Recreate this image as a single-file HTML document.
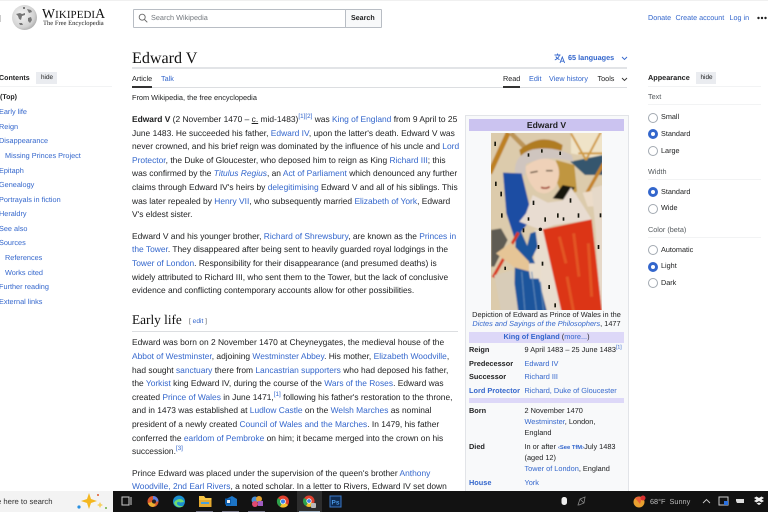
<!DOCTYPE html>
<html><head><meta charset="utf-8"><title>Edward V - Wikipedia</title>
<style>
html,body{margin:0;padding:0;background:#fff}
#p{position:relative;width:768px;height:512px;overflow:hidden;background:#fff;font-family:"Liberation Sans",sans-serif;color:#202122;filter:blur(.3px);text-rendering:geometricPrecision}
#p div,#p svg.a{position:absolute}
.l{white-space:nowrap;font-size:8.42px;line-height:14px;height:14px}
a{color:#36c;text-decoration:none}
sup{font-size:6.3px;line-height:0;color:#36c}
.s{font-size:7.3px;color:#36c}
.i{font-size:7.35px}
.b{font-weight:bold}
.t{font-size:7.25px}
.r{background:#eaecf0}
.o{width:8px;height:8px;border:1px solid #a2a9b1;border-radius:50%;background:#fff}
.c{width:4px;height:4px;border:3.5px solid #36c;border-radius:50%;background:#fff}
</style></head><body><div id="p">
<div style="left:0;top:0;width:768px;height:1px;background:#f0f0f0"></div>
<div style="left:0;top:15px;width:1px;height:7px;background:#ccc"></div>

<!-- logo -->
<svg class="a" style="left:11px;top:4px" width="27" height="27" viewBox="0 0 27 27"><defs><radialGradient id="g" cx=".4" cy=".4" r=".7"><stop offset="0" stop-color="#f6f6f6"/><stop offset=".7" stop-color="#d2d2d2"/><stop offset="1" stop-color="#a0a0a0"/></radialGradient></defs><circle cx="13.5" cy="13.5" r="12.5" fill="url(#g)"/><path d="M5 10l4-1 2 1 3-1 0 2-3 1-1 4-2-1-1-3zM16 5l4 1 1 2-3 1zM17 14l3-1 1 3-2 3-2-2zM8 19l3 0 1 2-3 0zM12 3l2 0 0 2-2 0z" fill="#777"/></svg>
<div class="l" style="left:42px;top:7px;font-family:'Liberation Serif',serif;font-size:13.8px;color:#111;letter-spacing:.1px">W<span style="font-size:10.9px">IKIPEDI</span>A</div>
<div class="l" style="left:43px;top:16.5px;font-family:'Liberation Serif',serif;font-size:6.55px;color:#222">The Free Encyclopedia</div>

<!-- search -->
<div style="left:133px;top:9px;width:211px;height:16.5px;border:1px solid #b8bdc4;border-radius:1px"></div>
<svg class="a" style="left:138px;top:13px" width="10" height="10" viewBox="0 0 10 10"><circle cx="4.200" cy="4.200" r="3" fill="none" stroke="#666" stroke-width=".9"/><path d="M6.500 6.500L9.300 9.300" stroke="#666" stroke-width=".9"/></svg>
<div class="l" style="left:151px;top:11px;font-size:7.3px;color:#72777d">Search Wikipedia</div>
<div style="left:344.5px;top:9px;width:35.5px;height:16.5px;border:1px solid #b8bdc4;background:#f8f9fa;border-radius:1px"></div>
<div class="l b" style="left:351px;top:11px;font-size:7.1px">Search</div>

<div class="l" style="left:648px;top:11px;font-size:7.2px"><a>Donate</a></div>
<div class="l" style="left:675.5px;top:11px;font-size:7.2px"><a>Create account</a></div>
<div class="l" style="left:729.5px;top:11px;font-size:7.2px"><a>Log in</a></div>
<svg class="a" style="left:756px;top:16px" width="12" height="4"><circle cx="2.500" cy="2" r="1.200" fill="#222"/><circle cx="6" cy="2" r="1.200" fill="#222"/><circle cx="9.500" cy="2" r="1.200" fill="#222"/></svg>

<!-- title -->
<div class="l" style="left:132px;top:49px;height:20px;line-height:20px;font-family:'Liberation Serif',serif;font-size:16.1px;color:#111">Edward V</div>
<div style="left:132px;top:67px;width:495px;height:1.5px;background:#e2e4e7"></div>
<svg class="a" style="left:554px;top:53px" width="12" height="11" viewBox="0 0 12 11"><path d="M.5 2h6M3.500 .5V2M5.500 2C5 4 3 6 .8 7M1.800 3.500C2.500 5 4 6 5.500 6.600M6 10l2.300-6 2.300 6M7 8.200h3" fill="none" stroke="#36c" stroke-width=".9"/></svg>
<div class="l b" style="left:568px;top:51px;font-size:7.3px;color:#36c">65 languages</div>
<svg class="a" style="left:621px;top:56px" width="7" height="5"><path d="M1 1l2.500 2.500L6 1" fill="none" stroke="#36c" stroke-width=".9"/></svg>

<div class="l t" style="left:132px;top:71.5px">Article</div>
<div class="l t" style="left:161px;top:71.5px"><a>Talk</a></div>
<div style="left:132px;top:86.7px;width:495px;height:1px;background:#dcdee1"></div>
<div style="left:132px;top:86.3px;width:20px;height:1.5px;background:#333"></div>
<div class="l t" style="left:503px;top:71.5px">Read</div>
<div style="left:503px;top:86.3px;width:17px;height:1.5px;background:#333"></div>
<div class="l t" style="left:529px;top:71.5px"><a>Edit</a></div>
<div class="l t" style="left:549px;top:71.5px"><a>View history</a></div>
<div class="l t" style="left:597.5px;top:71.5px">Tools</div>
<svg class="a" style="left:621px;top:76.5px" width="7" height="5"><path d="M1 1l2.500 2.500L6 1" fill="none" stroke="#333" stroke-width=".9"/></svg>
<div class="l i" style="left:132px;top:91px">From Wikipedia, the free encyclopedia</div>

<!-- contents -->
<div class="l b" style="left:-1px;top:71px;font-size:7.1px">Contents</div>
<div class="r" style="left:36px;top:72px;width:21px;height:11.5px"></div>
<div class="l" style="left:41px;top:70.5px;font-size:6.4px">hide</div>
<div style="left:0;top:86.3px;width:112px;height:1px;background:#f2f3f4"></div>
<div class="l b" style="left:0;top:90.5px;font-size:7px">(Top)</div>
<div class="l s" style="left:-1px;top:105px">Early life</div>
<div class="l s" style="left:-1px;top:119.7px">Reign</div>
<div class="l s" style="left:-1px;top:134.3px">Disappearance</div>
<div class="l s" style="left:5px;top:149px">Missing Princes Project</div>
<div class="l s" style="left:-1px;top:163.5px">Epitaph</div>
<div class="l s" style="left:-1px;top:178px">Genealogy</div>
<div class="l s" style="left:-1px;top:192.7px">Portrayals in fiction</div>
<div class="l s" style="left:-1px;top:207.3px">Heraldry</div>
<div class="l s" style="left:-1px;top:222px">See also</div>
<div class="l s" style="left:-1px;top:236.3px">Sources</div>
<div class="l s" style="left:5px;top:251px">References</div>
<div class="l s" style="left:5px;top:265.7px">Works cited</div>
<div class="l s" style="left:-1px;top:280.3px">Further reading</div>
<div class="l s" style="left:-1px;top:295px">External links</div>

<!-- body -->
<div class="l" style="left:132px;top:112px"><b>Edward V</b> (2 November 1470 – <u>c.</u> mid-1483)<sup>[1][2]</sup> was <a>King of England</a> from 9 April to 25</div>
<div class="l" style="left:132px;top:125.6px">June 1483. He succeeded his father, <a>Edward IV</a>, upon the latter's death. Edward V was</div>
<div class="l" style="left:132px;top:139.2px">never crowned, and his brief reign was dominated by the influence of his uncle and <a>Lord</a></div>
<div class="l" style="left:132px;top:152.8px"><a>Protector</a>, the Duke of Gloucester, who deposed him to reign as King <a>Richard III</a>; this</div>
<div class="l" style="left:132px;top:166.4px">was confirmed by the <a><i>Titulus Regius</i></a>, an <a>Act of Parliament</a> which denounced any further</div>
<div class="l" style="left:132px;top:180px">claims through Edward IV's heirs by <a>delegitimising</a> Edward V and all of his siblings. This</div>
<div class="l" style="left:132px;top:193.6px">was later repealed by <a>Henry VII</a>, who subsequently married <a>Elizabeth of York</a>, Edward</div>
<div class="l" style="left:132px;top:207.2px">V's eldest sister.</div>

<div class="l" style="left:132px;top:228.7px">Edward V and his younger brother, <a>Richard of Shrewsbury</a>, are known as the <a>Princes in</a></div>
<div class="l" style="left:132px;top:242.3px"><a>the Tower</a>. They disappeared after being sent to heavily guarded royal lodgings in the</div>
<div class="l" style="left:132px;top:255.9px"><a>Tower of London</a>. Responsibility for their disappearance (and presumed deaths) is</div>
<div class="l" style="left:132px;top:269.5px">widely attributed to Richard III, who sent them to the Tower, but the lack of conclusive</div>
<div class="l" style="left:132px;top:283.1px">evidence and conflicting contemporary accounts allow for other possibilities.</div>

<div class="l" style="left:132px;top:312px;height:16px;line-height:16px;font-family:'Liberation Serif',serif;font-size:13.3px;color:#111">Early life</div>
<div class="l" style="left:189px;top:315px;font-size:6.6px;color:#54595d">[ <a>edit</a> ]</div>
<div style="left:132px;top:330.5px;width:326px;height:1px;background:#dcdee1"></div>

<div class="l" style="left:132px;top:335.3px">Edward was born on 2 November 1470 at Cheyneygates, the medieval house of the</div>
<div class="l" style="left:132px;top:348.9px"><a>Abbot of Westminster</a>, adjoining <a>Westminster Abbey</a>. His mother, <a>Elizabeth Woodville</a>,</div>
<div class="l" style="left:132px;top:362.5px">had sought <a>sanctuary</a> there from <a>Lancastrian supporters</a> who had deposed his father,</div>
<div class="l" style="left:132px;top:376.1px">the <a>Yorkist</a> king Edward IV, during the course of the <a>Wars of the Roses</a>. Edward was</div>
<div class="l" style="left:132px;top:389.7px">created <a>Prince of Wales</a> in June 1471,<sup>[1]</sup> following his father's restoration to the throne,</div>
<div class="l" style="left:132px;top:403.3px">and in 1473 was established at <a>Ludlow Castle</a> on the <a>Welsh Marches</a> as nominal</div>
<div class="l" style="left:132px;top:416.9px">president of a newly created <a>Council of Wales and the Marches</a>. In 1479, his father</div>
<div class="l" style="left:132px;top:430.5px">conferred the <a>earldom of Pembroke</a> on him; it became merged into the crown on his</div>
<div class="l" style="left:132px;top:444.1px">succession.<sup>[3]</sup></div>
<div class="l" style="left:132px;top:465.7px">Prince Edward was placed under the supervision of the queen's brother <a>Anthony</a></div>
<div class="l" style="left:132px;top:479.3px"><a>Woodville, 2nd Earl Rivers</a>, a noted scholar. In a letter to Rivers, Edward IV set down</div>

<!-- infobox -->
<div style="left:465px;top:115px;width:162px;height:385px;background:#f8f9fa;border:1px solid #e2e4e8"></div>
<div style="left:469px;top:119px;width:155px;height:12px;background:#cbc3f0"></div>
<div class="l b" style="left:469px;top:118px;width:155px;text-align:center;font-size:8.6px">Edward V</div>

<!-- miniature: layered shapes, upper blue panel drawn late so it stays visible -->
<svg class="a" style="left:490.5px;top:133px" width="111" height="177" viewBox="0 9 333 531" preserveAspectRatio="none">
<defs><filter id="f" x="-5%" y="-5%" width="110%" height="110%"><feGaussianBlur stdDeviation="2"/></filter><filter id="f2"><feGaussianBlur stdDeviation=".9"/></filter></defs>
<g filter="url(#f)">
<rect x="-10" y="0" width="360" height="550" fill="#dccbac"/>
<path d="M240 5H340V90L240 70z" fill="#efe3c8"/>
<path d="M238 95L336 75V135L282 135z" fill="#35566e"/>
<path d="M240 10L285 90M330 5L285 90M262 70H336" stroke="#cf9a40" stroke-width="6" fill="none"/>
<path d="M52 8L-4 130" stroke="#bd8022" stroke-width="15"/>
<path d="M338 100L288 188" stroke="#c4842a" stroke-width="10"/>
<path d="M60 10L100 50" stroke="#bc9558" stroke-width="14"/>
<path d="M0 300L30 295L50 330L10 410H0z" fill="#5f5b52"/>
<path d="M85 60Q150 5 215 45L210 70Q150 45 90 80z" fill="#b07c20"/>
<path d="M72 128Q68 75 125 58Q190 48 242 75L248 95Q170 72 105 102L102 138z" fill="#cfc5bf"/>
<path d="M195 90L250 105L258 185L215 200L195 150z" fill="#c09640"/>
<path d="M104 110Q150 72 195 95Q215 130 192 172Q165 202 135 182Q105 150 104 110z" fill="#efd1b8"/>
<path d="M150 172Q165 178 176 170" stroke="#a0402e" stroke-width="5" fill="none"/>
<path d="M118 128l22-4M165 122l20 0" stroke="#5e4c38" stroke-width="4"/>
<path d="M185 205L215 165L252 172L225 210z" fill="#17130e"/>
<path d="M36 128L92 130L124 262L72 330L46 250z" fill="#1f4ea3"/>
<path d="M125 195L170 218L215 212L240 172L275 225L302 268L190 285L150 300L85 275L105 250z" fill="#e8dcd1"/>
<path d="M275 188L320 180L325 228L290 230z" fill="#ecdcc9"/>
<path d="M302 175L338 165V546H328L314 300z" fill="#e6d9c9"/>
<path d="M146 300L302 268L333 546H208z" fill="#dc3618"/>
<path d="M205 320L225 400M248 310L264 440M292 340L302 500M228 440L248 546" stroke="#e4622a" stroke-width="9" fill="none" opacity=".7"/>
<path d="M130 300L156 300L212 546H170L130 400z" fill="#e8ddcf"/>
<path d="M74 320L88 300L132 400L168 546H68z" fill="#1f559c"/>
<path d="M118 310L134 305L140 350L115 400L108 350z" fill="#1f559c"/>
<path d="M110 400L150 400L152 446H118z" fill="#e9ddcc"/>
<path d="M92 425L102 546M122 425L137 546M148 455L158 546" stroke="#5f8ab8" stroke-width="3"/>
<path d="M6 442L82 308" stroke="#d8381a" stroke-width="9"/>
<path d="M15 370L60 338L114 395L114 424L70 412z" fill="#e6c596"/>
<path d="M10 436L65 420L82 546H30z" fill="#d8ccb8"/>
</g>
<g fill="#17120e" filter="url(#f2)"><rect x="10" y="35" width="5" height="13"/><rect x="28" y="185" width="5" height="14"/><rect x="12" y="155" width="5" height="13"/><rect x="30" y="250" width="5" height="13"/><rect x="125" y="212" width="5" height="13"/><rect x="160" y="262" width="5" height="13"/><rect x="198" y="250" width="5" height="13"/><rect x="236" y="205" width="5" height="13"/><rect x="260" y="250" width="5" height="13"/><rect x="110" y="262" width="5" height="10"/><rect x="215" y="262" width="5" height="10"/><circle cx="148" cy="298" r="5"/><rect x="140" y="345" width="5" height="12"/><rect x="152" y="395" width="5" height="12"/><rect x="172" y="465" width="5" height="12"/><rect x="190" y="520" width="5" height="12"/><rect x="95" y="295" width="5" height="12"/><rect x="320" y="345" width="5" height="12"/><rect x="110" y="70" width="5" height="10"/><rect x="150" y="58" width="5" height="10"/><rect x="205" y="65" width="5" height="10"/><rect x="40" y="410" width="5" height="10"/><rect x="326" y="250" width="5" height="12"/></g>
</svg>
<div class="l i" style="left:469px;top:308.3px;width:155px;text-align:center">Depiction of Edward as Prince of Wales in the</div>
<div class="l i" style="left:469px;top:317px;width:155px;text-align:center"><a><i>Dictes and Sayings of the Philosophers</i></a>, 1477</div>
<div style="left:469px;top:331.7px;width:155px;height:11px;background:#ddd8f8"></div>
<div class="l i" style="left:469px;top:330px;width:155px;text-align:center"><a class="b">King of England</a> (<a>more...</a>)</div>
<div class="l i b" style="left:469px;top:343px">Reign</div>
<div class="l i" style="left:524.5px;top:343px">9 April 1483 – 25 June 1483<sup style="font-size:5.2px">[1]</sup></div>
<div class="l i b" style="left:469px;top:356.7px">Predecessor</div>
<div class="l i" style="left:524.5px;top:356.7px"><a>Edward IV</a></div>
<div class="l i b" style="left:469px;top:370.3px">Successor</div>
<div class="l i" style="left:524.5px;top:370.3px"><a>Richard III</a></div>
<div class="l i b" style="left:469px;top:383.5px"><a>Lord Protector</a></div>
<div class="l i" style="left:524.5px;top:383.5px"><a>Richard, Duke of Gloucester</a></div>
<div style="left:469px;top:398px;width:155px;height:5px;background:#ddd8f8"></div>
<div class="l i b" style="left:469px;top:403.5px">Born</div>
<div class="l i" style="left:524.5px;top:403.5px">2 November 1470</div>
<div class="l i" style="left:524.5px;top:414.5px"><a>Westminster</a>, London,</div>
<div class="l i" style="left:524.5px;top:425.5px">England</div>
<div class="l i b" style="left:469px;top:439.5px">Died</div>
<div class="l i" style="left:524.5px;top:439.5px">In or after <a class="b" style="font-size:5.8px">‹See TfM›</a>July 1483</div>
<div class="l i" style="left:524.5px;top:450.5px">(aged 12)</div>
<div class="l i" style="left:524.5px;top:461.7px"><a>Tower of London</a>, England</div>
<div class="l i b" style="left:469px;top:475.5px"><a>House</a></div>
<div class="l i" style="left:524.5px;top:475.5px"><a>York</a></div>

<!-- appearance -->
<div class="l b" style="left:648px;top:71px;font-size:7.3px">Appearance</div>
<div class="r" style="left:696px;top:72px;width:20px;height:11.5px"></div>
<div class="l" style="left:700.5px;top:70.5px;font-size:6.4px">hide</div>
<div style="left:648px;top:86.3px;width:113px;height:1px;background:#f2f3f4"></div>
<div class="l t" style="left:648px;top:90px;color:#54595d">Text</div>
<div style="left:648px;top:104.3px;width:113px;height:1px;background:#f2f3f4"></div>
<div class="o" style="left:648px;top:112.5px"></div><div class="l t" style="left:661px;top:110px">Small</div>
<div class="c" style="left:648px;top:129.2px"></div><div class="l t" style="left:661px;top:126.7px">Standard</div>
<div class="o" style="left:648px;top:146px"></div><div class="l t" style="left:661px;top:143.5px">Large</div>
<div class="l t" style="left:648px;top:165px;color:#54595d">Width</div>
<div style="left:648px;top:179.3px;width:113px;height:1px;background:#f2f3f4"></div>
<div class="c" style="left:648px;top:187px"></div><div class="l t" style="left:661px;top:184.5px">Standard</div>
<div class="o" style="left:648px;top:203.5px"></div><div class="l t" style="left:661px;top:201px">Wide</div>
<div class="l t" style="left:648px;top:222.5px;color:#54595d">Color (beta)</div>
<div style="left:648px;top:237px;width:113px;height:1px;background:#f2f3f4"></div>
<div class="o" style="left:648px;top:245px"></div><div class="l t" style="left:661px;top:242.5px">Automatic</div>
<div class="c" style="left:648px;top:261.5px"></div><div class="l t" style="left:661px;top:259px">Light</div>
<div class="o" style="left:648px;top:278px"></div><div class="l t" style="left:661px;top:275.5px">Dark</div>

<!-- taskbar -->
<div style="left:0;top:491px;width:768px;height:21px;background:#121212"></div>
<div style="left:0;top:491px;width:113px;height:21px;background:#f3f3f3"></div>
<div class="l" style="left:-3px;top:495px;font-size:7.7px;color:#333">e here to search</div>
<svg class="a" style="left:74px;top:491px" width="36" height="21" viewBox="0 0 36 21"><path d="M15 2l2 6 6 2-6 2-2 6-2-6-6-2 6-2z" fill="#f4b720"/><path d="M26 11l1 2 2 1-2 1-1 2-1-2-2-1 2-1z" fill="#f6d060"/><circle cx="5" cy="16" r="1.600" fill="#2a90e0"/><circle cx="24" cy="4" r="1" fill="#e05a30"/><circle cx="32" cy="17" r="1" fill="#6db040"/></svg>
<div style="left:297px;top:491px;width:25px;height:21px;background:#2d2d2d"></div>
<div style="left:299px;top:510.5px;width:21px;height:1.5px;background:#9ab"></div>
<div style="left:196px;top:510.5px;width:17px;height:1.5px;background:#778"></div>
<div style="left:222px;top:510.5px;width:17px;height:1.5px;background:#778"></div>
<div style="left:248px;top:510.5px;width:17px;height:1.5px;background:#778"></div>
<svg class="a" style="left:113px;top:491px" width="250" height="21" viewBox="113 491 250 21">
<path d="M122 497h7v8h-7zM131 497v8" fill="none" stroke="#ccc" stroke-width="1"/>
<circle cx="153" cy="501.500" r="5.500" fill="#d8562e"/><path d="M153 496a5.500 5.500 0 0 1 5.500 5.500h-5.500z" fill="#5f7fe0"/><path d="M148 503a5.500 5.500 0 0 0 5 4l3-2-4-3z" fill="#e8b030"/><circle cx="154" cy="501.500" r="2" fill="#222"/>
<circle cx="179" cy="501.500" r="6" fill="#1b8fd0"/><path d="M174 503c2-5 9-5 10-1l-4 .5c-1-1-3-1-3 1s4 3.500 7 2a6 6 0 0 1-10-2.500z" fill="#6fdc70"/>
<path d="M199 496h5l1.500 2h6v9h-12.500z" fill="#f6c445"/><rect x="199" y="500" width="12.500" height="7" fill="#e5a92f"/><rect x="201" y="502" width="8" height="2" fill="#4aa0dc"/>
<path d="M226 499l6-3 5 3v7h-11z" fill="#1c74c6"/><rect x="225" y="498.500" width="6" height="6" fill="#0a5aa8"/><rect x="227" y="500" width="3" height="3" fill="#eee"/>
<circle cx="255" cy="500" r="3.500" fill="#4a90d8"/><circle cx="259" cy="499" r="3" fill="#e0a030"/><circle cx="255" cy="504" r="3" fill="#e04a70"/><rect x="258" y="501" width="5" height="5" fill="#a05cc0"/>
<circle cx="283" cy="501.500" r="6" fill="#e0412f"/><path d="M283 501.500L288 505A6 6 0 0 1 280 506.700z" fill="#f3c22c"/><path d="M283 501.500L280 506.700A6 6 0 0 1 278 498z" fill="#2ca24c"/><circle cx="283" cy="501.500" r="2.800" fill="#fff"/><circle cx="283" cy="501.500" r="2.100" fill="#3a80e8"/>
<circle cx="309" cy="501" r="5.500" fill="#e0412f"/><path d="M309 501L314 504A5.500 5.500 0 0 1 306 506z" fill="#f3c22c"/><path d="M309 501L306 506A5.500 5.500 0 0 1 304 498z" fill="#2ca24c"/><circle cx="309" cy="501" r="2.600" fill="#fff"/><circle cx="309" cy="501" r="1.900" fill="#3a80e8"/><rect x="311" y="503" width="5" height="5" rx="1" fill="#bbb"/>
<rect x="330" y="496" width="11" height="11" fill="#0e2a50" stroke="#3a78c8"/>
<text x="331.500" y="504.500" font-size="6.500" font-weight="bold" fill="#4a9ae8" font-family="Liberation Sans">Ps</text>
</svg>
<svg class="a" style="left:555px;top:491px" width="213" height="21" viewBox="555 491 213 21">
<rect x="561.500" y="497" width="5.500" height="8" rx="2.500" fill="#eee"/>
<path d="M578 505l2-6 5-2-1 6-5 2zM580 499l4 4" fill="none" stroke="#888" stroke-width=".8"/>
<circle cx="639" cy="502" r="5.500" fill="#e8a030"/><path d="M635 498a5.500 5.500 0 0 1 7 0l-2 6z" fill="#e8603a"/><circle cx="643" cy="498" r="2.500" fill="#d83030"/>
<path d="M703 503l3.500-3.500 3.500 3.500" fill="none" stroke="#ccc" stroke-width=".9"/>
<rect x="719" y="497" width="9" height="8" fill="none" stroke="#ccc"/><rect x="724" y="501" width="4" height="4" fill="#2a70e0"/>
<path d="M736 499h8v4h-7l-1-2z" fill="#ddd"/>
<path d="M754 498l2.500-1.500 2.500 1.500 2.500-1.500 2.500 1.500-2.500 1.500 2.500 1.500-2.500 1.500-2.500-1.500-2.500 1.500-2.500-1.500 2.500-1.500zM756.500 503.500l2.500-1 2.500 1-2.500 1.500z" fill="#eee"/>
</svg>
<div class="l" style="left:650px;top:495px;font-size:7.3px;color:#bbb">68°F&nbsp; Sunny</div>
</div></body></html>
